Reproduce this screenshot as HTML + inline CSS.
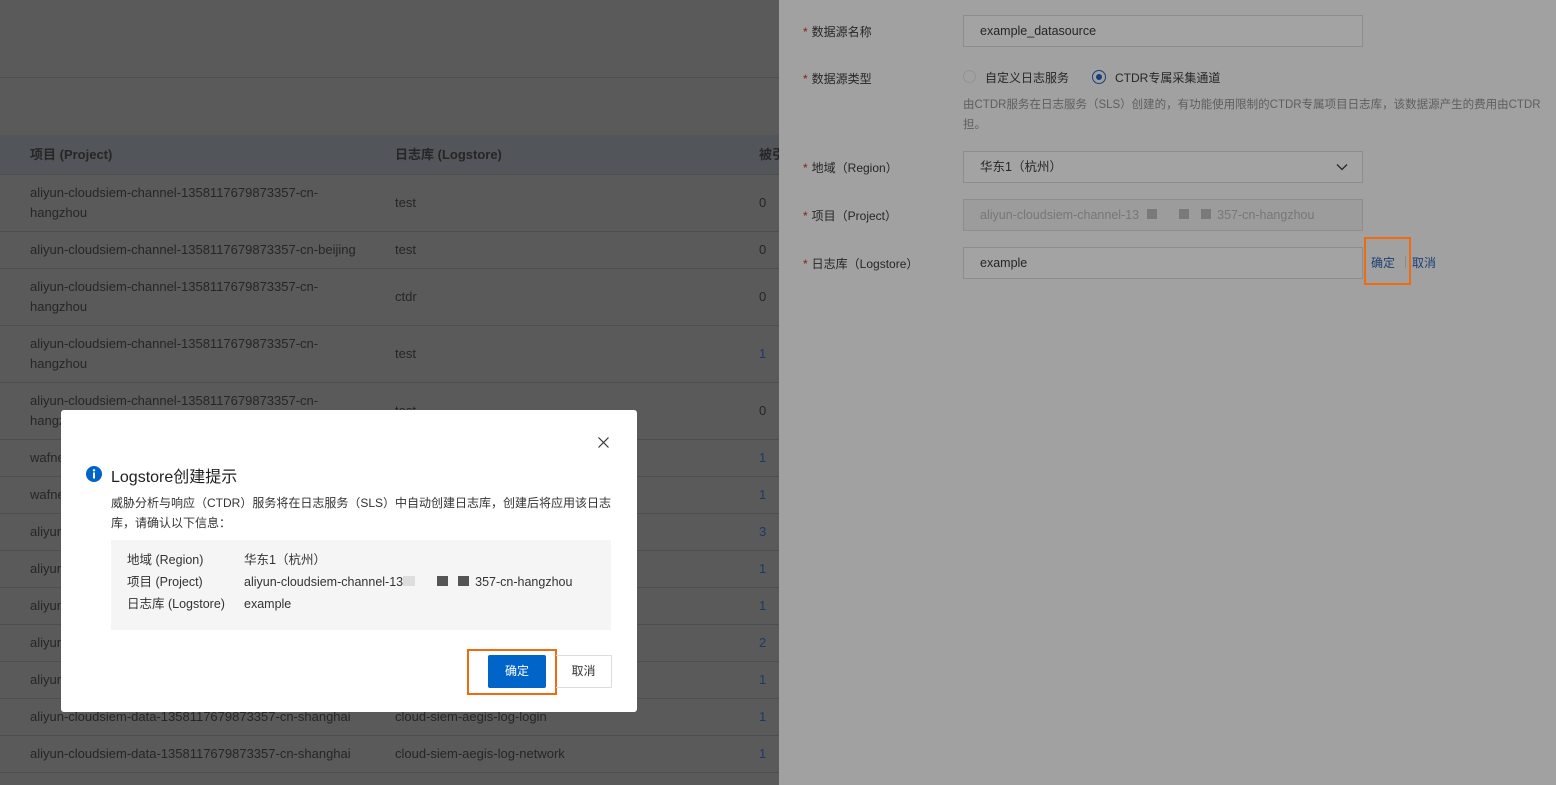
<!DOCTYPE html><html><head><meta charset="utf-8"><style>
*{margin:0;padding:0;box-sizing:border-box}
body{width:1556px;height:785px;overflow:hidden;position:relative;font-family:"Liberation Sans","Noto Sans CJK SC",sans-serif;font-size:12px;color:#262626;background:#5a5a5a}
.left{position:absolute;left:0;top:0;width:779px;height:785px;background:#5a5a5a;overflow:hidden;font-size:13px}
.t{position:absolute;left:30px;line-height:20px;white-space:nowrap}
.c2{position:absolute;left:395px;white-space:nowrap}
.c3{position:absolute;left:759px;white-space:nowrap}
.row{position:absolute;left:0;width:779px;border-bottom:1px solid #4e4e4e}
.right{position:absolute;left:779px;top:0;width:777px;height:785px;background:#a1a1a1;font-size:12px;overflow:hidden}
.lbl{position:absolute;left:24px;color:#262626}
.lbl b{color:#8b1a0f;font-weight:normal;margin-right:4px}
.inp{position:absolute;left:184px;width:400px;height:32px;border:1px solid #8d8d8d;background:#a3a3a3;padding-left:16px;line-height:30px;white-space:nowrap;font-size:12.5px}
.modal{position:absolute;left:61px;top:410px;width:576px;height:302px;background:#fff;border-radius:3px}
.b{color:#1b3a66}
</style></head><body>
<div class="left">
<div style="position:absolute;top:77px;left:0;width:779px;border-top:1px solid #4f4f4f"></div>
<div style="position:absolute;top:135px;left:0;width:779px;height:40px;background:#52555a;border-bottom:1px solid #4e4e4e;font-weight:bold;line-height:40px;white-space:nowrap"><span style="position:absolute;left:30px">项目 (Project)</span><span style="position:absolute;left:395px">日志库 (Logstore)</span><span style="position:absolute;left:759px">被引</span></div>
<div class="row" style="top:175px;height:57px"><span class="t" style="top:8px">aliyun-cloudsiem-channel-1358117679873357-cn-<br>hangzhou</span><span class="c2" style="top:20px">test</span><span class="c3" style="top:20px">0</span></div>
<div class="row" style="top:232px;height:37px"><span class="t" style="top:8px">aliyun-cloudsiem-channel-1358117679873357-cn-beijing</span><span class="c2" style="top:10px">test</span><span class="c3" style="top:10px">0</span></div>
<div class="row" style="top:269px;height:57px"><span class="t" style="top:8px">aliyun-cloudsiem-channel-1358117679873357-cn-<br>hangzhou</span><span class="c2" style="top:20px">ctdr</span><span class="c3" style="top:20px">0</span></div>
<div class="row" style="top:326px;height:57px"><span class="t" style="top:8px">aliyun-cloudsiem-channel-1358117679873357-cn-<br>hangzhou</span><span class="c2" style="top:20px">test</span><span class="c3 b" style="top:20px">1</span></div>
<div class="row" style="top:383px;height:57px"><span class="t" style="top:8px">aliyun-cloudsiem-channel-1358117679873357-cn-<br>hangzhou</span><span class="c2" style="top:20px">test</span><span class="c3" style="top:20px">0</span></div>
<div class="row" style="top:440px;height:37px"><span class="t" style="top:8px">wafnet</span><span class="c3 b" style="top:10px">1</span></div>
<div class="row" style="top:477px;height:37px"><span class="t" style="top:8px">wafnet</span><span class="c3 b" style="top:10px">1</span></div>
<div class="row" style="top:514px;height:37px"><span class="t" style="top:8px">aliyun</span><span class="c3 b" style="top:10px">3</span></div>
<div class="row" style="top:551px;height:37px"><span class="t" style="top:8px">aliyun</span><span class="c3 b" style="top:10px">1</span></div>
<div class="row" style="top:588px;height:37px"><span class="t" style="top:8px">aliyun</span><span class="c3 b" style="top:10px">1</span></div>
<div class="row" style="top:625px;height:37px"><span class="t" style="top:8px">aliyun</span><span class="c3 b" style="top:10px">2</span></div>
<div class="row" style="top:662px;height:37px"><span class="t" style="top:8px">aliyun</span><span class="c3 b" style="top:10px">1</span></div>
<div class="row" style="top:699px;height:37px"><span class="t" style="top:8px">aliyun-cloudsiem-data-1358117679873357-cn-shanghai</span><span class="c2" style="top:10px">cloud-siem-aegis-log-login</span><span class="c3 b" style="top:10px">1</span></div>
<div class="row" style="top:736px;height:37px"><span class="t" style="top:8px">aliyun-cloudsiem-data-1358117679873357-cn-shanghai</span><span class="c2" style="top:10px">cloud-siem-aegis-log-network</span><span class="c3 b" style="top:10px">1</span></div>
</div>
<div class="right">
<div class="lbl" style="top:23px"><b>*</b>数据源名称</div>
<div class="inp" style="top:15px">example_datasource</div>
<div class="lbl" style="top:70px"><b>*</b>数据源类型</div>
<div style="position:absolute;left:184px;top:70px;width:13px;height:13px;border:1px solid #939393;border-radius:50%"></div>
<span style="position:absolute;left:206px;top:69px">自定义日志服务</span>
<div style="position:absolute;left:313px;top:70px;width:14px;height:14px;border:1px solid #1a3f78;border-radius:50%;background:#a1a1a1"><div style="margin:3px;width:6px;height:6px;border-radius:50%;background:#1a3f78"></div></div>
<span style="position:absolute;left:336px;top:69px">CTDR专属采集通道</span>
<div style="position:absolute;left:184px;top:95px;width:600px;line-height:20px;color:#5e5e5e;white-space:nowrap;font-size:11.5px">由CTDR服务在日志服务（SLS）创建的，有功能使用限制的CTDR专属项目日志库，该数据源产生的费用由CTDR<br>担。</div>
<div class="lbl" style="top:159px"><b>*</b>地域（Region）</div>
<div class="inp" style="top:151px">华东1（杭州）<svg style="position:absolute;right:14px;top:11px" width="12" height="8" viewBox="0 0 12 8"><path d="M1 1.5l5 5 5-5" fill="none" stroke="#262626" stroke-width="1.3"/></svg></div>
<div class="lbl" style="top:207px"><b>*</b>项目（Project）</div>
<div class="inp" style="top:199px;background:#9c9c9c;color:#777">aliyun-cloudsiem-channel-13<span style="display:inline-block;width:10px;height:10px;background:#7a7a7a;margin:0 22px 0 8px"></span><span style="display:inline-block;width:10px;height:10px;background:#7a7a7a;margin-right:12px"></span><span style="display:inline-block;width:10px;height:10px;background:#7a7a7a;margin-right:6px"></span>357-cn-hangzhou</div>
<div class="lbl" style="top:255px"><b>*</b>日志库（Logstore）</div>
<div class="inp" style="top:247px">example</div>
<div style="position:absolute;left:585px;top:237px;width:47px;height:48px;border:2px solid #f06a0f"></div>
<span style="position:absolute;left:592px;top:254px;color:#1d3f73">确定</span>
<div style="position:absolute;left:626px;top:256px;height:12px;border-left:1px solid #8d8d8d"></div>
<span style="position:absolute;left:633px;top:254px;color:#1d3f73">取消</span>
</div>
<div class="modal">
<svg style="position:absolute;left:537px;top:27px" width="11" height="11" viewBox="0 0 11 11"><path d="M.5.5l10 10M10.5.5l-10 10" stroke="#333" stroke-width="1.2"/></svg>
<svg style="position:absolute;left:25px;top:56px" width="16" height="16" viewBox="0 0 16 16"><circle cx="8" cy="8" r="8" fill="#0064c8"/><rect x="7" y="6.5" width="2" height="6" fill="#fff"/><circle cx="8" cy="4.3" r="1.2" fill="#fff"/></svg>
<div style="position:absolute;left:50px;top:53px;font-size:16px;color:#1f1f1f">Logstore创建提示</div>
<div style="position:absolute;left:50px;top:83px;width:510px;line-height:20px;color:#333">威胁分析与响应（CTDR）服务将在日志服务（SLS）中自动创建日志库，创建后将应用该日志库，请确认以下信息：</div>
<div style="position:absolute;left:50px;top:130px;width:500px;height:90px;background:#f5f5f5;line-height:22px;color:#333;font-size:12.5px">
<div style="position:absolute;left:16px;top:9px">地域 (Region)<br>项目 (Project)<br>日志库 (Logstore)</div>
<div style="position:absolute;left:133px;top:9px;white-space:nowrap">华东1（杭州）<br>aliyun-cloudsiem-channel-13<span style="display:inline-block;width:12px;height:10px;background:#ddd;margin-right:22px"></span><span style="display:inline-block;width:11px;height:10px;background:#555;margin-right:10px"></span><span style="display:inline-block;width:11px;height:10px;background:#555;margin-right:6px"></span>357-cn-hangzhou<br>example</div>
</div>
<div style="position:absolute;left:406px;top:239px;width:90px;height:46px;border:2px solid #f06a0f"></div>
<div style="position:absolute;left:427px;top:245px;width:58px;height:33px;background:#0064c8;color:#fff;text-align:center;line-height:33px;border-radius:2px">确定</div>
<div style="position:absolute;left:495px;top:245px;width:56px;height:33px;border:1px solid #ddd;border-left:none;text-align:center;line-height:31px;color:#333">取消</div>
</div>
</body></html>
